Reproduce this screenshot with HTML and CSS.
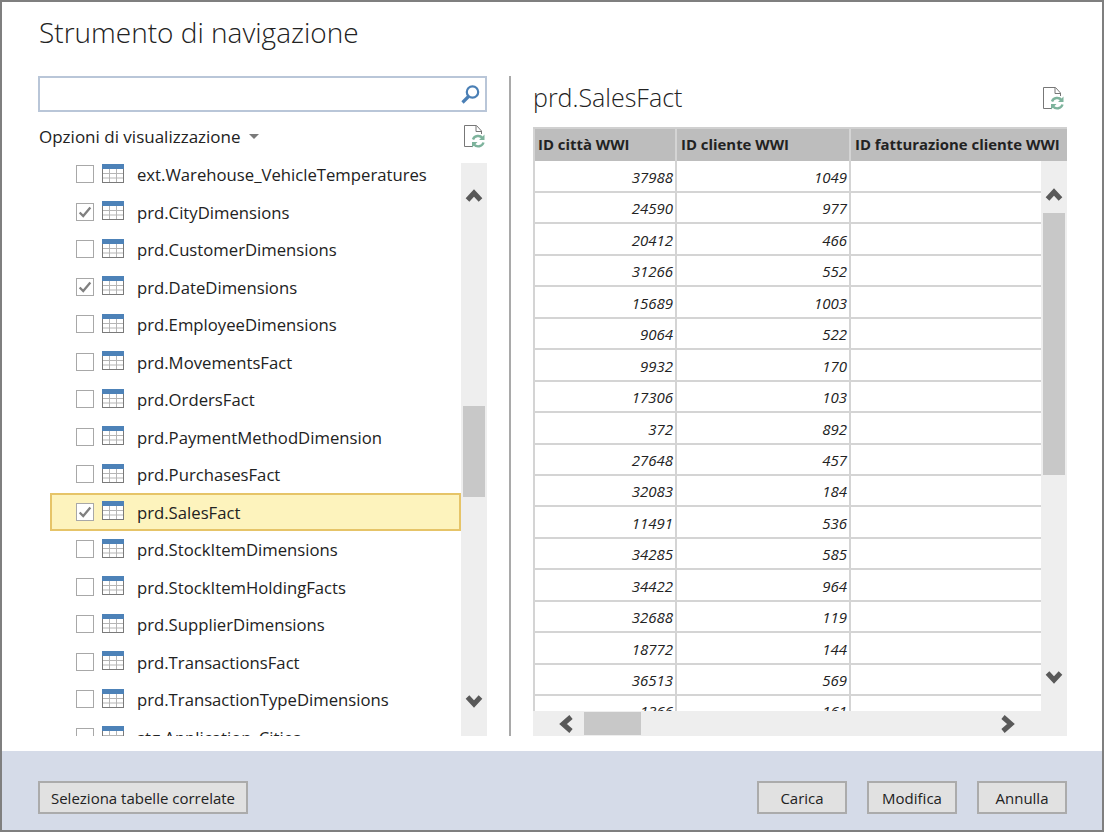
FILE: index.html
```html
<!DOCTYPE html>
<html lang="it">
<head>
    <meta charset="UTF-8">
    <title>Strumento di navigazione</title>
    <link rel="stylesheet" href="styles.css">
</head>
<body>
    <svg class="defs" width="0" height="0">
        <symbol id="table-icon" viewBox="0 0 22 19">
            <rect x="0.5" y="0.5" width="21" height="18" fill="#fff" stroke="#7a7a7a"/>
            <path d="M1 9.5h20M1 14h20M7.5 5v13M14.5 5v13" stroke="#b5b5b5" fill="none"/>
            <rect width="22" height="5" fill="#4d82b8"/>
        </symbol>
        <symbol id="refresh-icon" viewBox="0 0 22 23">
            <path d="M10 21.5H1.5V0.5H13.5L18.5 6V9M13 1V6.5H18.5" fill="none" stroke="#777" stroke-width="1"/>
            <path d="M10 14.5a5.6 5.6 0 0 1 9.5 -1.5M20.5 17.5a5.6 5.6 0 0 1 -9.5 2" fill="none" stroke="#7db39c" stroke-width="2.4"/>
            <path d="M21.5 9.5v5.5h-5.5zM9 22.5v-5.5h5.5z" fill="#7db39c"/>
        </symbol>
        <symbol id="chevron-up" viewBox="0 0 18 14">
            <path d="M2.5 12L9 5l6.500 7" fill="none" stroke="#595959" stroke-width="5"/>
        </symbol>
        <symbol id="chevron-down" viewBox="0 0 18 14">
            <path d="M2.500 2L9 9l6.500-7" fill="none" stroke="#595959" stroke-width="5"/>
        </symbol>
        <symbol id="chevron-left" viewBox="0 0 16 18">
            <path d="M14 2L6 9l8 7" fill="none" stroke="#595959" stroke-width="5"/>
        </symbol>
        <symbol id="chevron-right" viewBox="0 0 16 18">
            <path d="M2 2l8 7-8 7" fill="none" stroke="#595959" stroke-width="5"/>
        </symbol>
        <symbol id="check-icon" viewBox="0 0 18 18">
            <path d="M3 9.500l4 4 8-9.500" fill="none" stroke="#808080" stroke-width="2.600"/>
        </symbol>
    </svg>

    <div class="dialog">
        <h1 class="dialog-title">Strumento di navigazione</h1>

        <div class="dialog-body">
            <div class="nav-pane">
                <div class="search-box">
                    <svg class="search-icon" width="19" height="19" viewBox="0 0 19 19">
                        <circle cx="11.500" cy="7" r="5.700" fill="none" stroke="#4a7fb5" stroke-width="2.200"/>
                        <path d="M7.500 11.500L1.500 17.500" stroke="#4a7fb5" stroke-width="3.200" fill="none"/>
                    </svg>
                </div>
                <div class="options-row">
                    <span class="options-label">Opzioni di visualizzazione</span>
                    <span class="caret"></span>
                    <svg class="refresh" width="22" height="23"><use href="#refresh-icon"/></svg>
                </div>
                <div class="list-wrap">
                    <div class="list">
                        <ul class="tables">
                            <li class="table-row"><span class="check"></span><svg class="tbl" width="22" height="19"><use href="#table-icon"/></svg><span class="name">ext.Warehouse_VehicleTemperatures</span></li>
                            <li class="table-row"><span class="check"><svg width="16" height="16"><use href="#check-icon"/></svg></span><svg class="tbl" width="22" height="19"><use href="#table-icon"/></svg><span class="name">prd.CityDimensions</span></li>
                            <li class="table-row"><span class="check"></span><svg class="tbl" width="22" height="19"><use href="#table-icon"/></svg><span class="name">prd.CustomerDimensions</span></li>
                            <li class="table-row"><span class="check"><svg width="16" height="16"><use href="#check-icon"/></svg></span><svg class="tbl" width="22" height="19"><use href="#table-icon"/></svg><span class="name">prd.DateDimensions</span></li>
                            <li class="table-row"><span class="check"></span><svg class="tbl" width="22" height="19"><use href="#table-icon"/></svg><span class="name">prd.EmployeeDimensions</span></li>
                            <li class="table-row"><span class="check"></span><svg class="tbl" width="22" height="19"><use href="#table-icon"/></svg><span class="name">prd.MovementsFact</span></li>
                            <li class="table-row"><span class="check"></span><svg class="tbl" width="22" height="19"><use href="#table-icon"/></svg><span class="name">prd.OrdersFact</span></li>
                            <li class="table-row"><span class="check"></span><svg class="tbl" width="22" height="19"><use href="#table-icon"/></svg><span class="name">prd.PaymentMethodDimension</span></li>
                            <li class="table-row"><span class="check"></span><svg class="tbl" width="22" height="19"><use href="#table-icon"/></svg><span class="name">prd.PurchasesFact</span></li>
                            <li class="table-row selected"><span class="check"><svg width="16" height="16"><use href="#check-icon"/></svg></span><svg class="tbl" width="22" height="19"><use href="#table-icon"/></svg><span class="name">prd.SalesFact</span></li>
                            <li class="table-row"><span class="check"></span><svg class="tbl" width="22" height="19"><use href="#table-icon"/></svg><span class="name">prd.StockItemDimensions</span></li>
                            <li class="table-row"><span class="check"></span><svg class="tbl" width="22" height="19"><use href="#table-icon"/></svg><span class="name">prd.StockItemHoldingFacts</span></li>
                            <li class="table-row"><span class="check"></span><svg class="tbl" width="22" height="19"><use href="#table-icon"/></svg><span class="name">prd.SupplierDimensions</span></li>
                            <li class="table-row"><span class="check"></span><svg class="tbl" width="22" height="19"><use href="#table-icon"/></svg><span class="name">prd.TransactionsFact</span></li>
                            <li class="table-row"><span class="check"></span><svg class="tbl" width="22" height="19"><use href="#table-icon"/></svg><span class="name">prd.TransactionTypeDimensions</span></li>
                            <li class="table-row"><span class="check"></span><svg class="tbl" width="22" height="19"><use href="#table-icon"/></svg><span class="name">stg.Application_Cities</span></li>
                        </ul>
                    </div>
                    <div class="vscroll list-scroll">
                        <svg class="chev-up" width="18" height="14"><use href="#chevron-up"/></svg>
                        <div class="thumb"></div>
                        <svg class="chev-down" width="18" height="14"><use href="#chevron-down"/></svg>
                    </div>
                </div>
            </div>

            <div class="preview-pane">
                <div class="preview-head">
                    <h2 class="preview-title">prd.SalesFact</h2>
                    <svg class="refresh" width="22" height="23"><use href="#refresh-icon"/></svg>
                </div>
                <div class="grid-head">
                    <div class="col-head">ID città WWI</div>
                    <div class="col-head">ID cliente WWI</div>
                    <div class="col-head">ID fatturazione cliente WWI</div>
                </div>
                <div class="grid-main">
                    <div class="grid-rows">
                        <div class="grid-row"><div class="cell">37988</div><div class="cell">1049</div><div class="cell"></div></div>
                        <div class="grid-row"><div class="cell">24590</div><div class="cell">977</div><div class="cell"></div></div>
                        <div class="grid-row"><div class="cell">20412</div><div class="cell">466</div><div class="cell"></div></div>
                        <div class="grid-row"><div class="cell">31266</div><div class="cell">552</div><div class="cell"></div></div>
                        <div class="grid-row"><div class="cell">15689</div><div class="cell">1003</div><div class="cell"></div></div>
                        <div class="grid-row"><div class="cell">9064</div><div class="cell">522</div><div class="cell"></div></div>
                        <div class="grid-row"><div class="cell">9932</div><div class="cell">170</div><div class="cell"></div></div>
                        <div class="grid-row"><div class="cell">17306</div><div class="cell">103</div><div class="cell"></div></div>
                        <div class="grid-row"><div class="cell">372</div><div class="cell">892</div><div class="cell"></div></div>
                        <div class="grid-row"><div class="cell">27648</div><div class="cell">457</div><div class="cell"></div></div>
                        <div class="grid-row"><div class="cell">32083</div><div class="cell">184</div><div class="cell"></div></div>
                        <div class="grid-row"><div class="cell">11491</div><div class="cell">536</div><div class="cell"></div></div>
                        <div class="grid-row"><div class="cell">34285</div><div class="cell">585</div><div class="cell"></div></div>
                        <div class="grid-row"><div class="cell">34422</div><div class="cell">964</div><div class="cell"></div></div>
                        <div class="grid-row"><div class="cell">32688</div><div class="cell">119</div><div class="cell"></div></div>
                        <div class="grid-row"><div class="cell">18772</div><div class="cell">144</div><div class="cell"></div></div>
                        <div class="grid-row"><div class="cell">36513</div><div class="cell">569</div><div class="cell"></div></div>
                        <div class="grid-row"><div class="cell">1366</div><div class="cell">161</div><div class="cell"></div></div>
                    </div>
                    <div class="vscroll grid-scroll">
                        <svg class="chev-up" width="18" height="14"><use href="#chevron-up"/></svg>
                        <div class="thumb"></div>
                        <svg class="chev-down" width="18" height="14"><use href="#chevron-down"/></svg>
                    </div>
                </div>
                <div class="hscroll">
                    <svg class="chev-left" width="16" height="18"><use href="#chevron-left"/></svg>
                    <div class="hthumb"></div>
                    <svg class="chev-right" width="16" height="18"><use href="#chevron-right"/></svg>
                </div>
            </div>
        </div>

        <div class="dialog-footer">
            <button class="btn btn-related">Seleziona tabelle correlate</button>
            <div class="footer-actions">
                <button class="btn btn-action">Carica</button>
                <button class="btn btn-action">Modifica</button>
                <button class="btn btn-action">Annulla</button>
            </div>
        </div>
    </div>
</body>
</html>
```

FILE: styles.css
```css
* {
    margin: 0;
    padding: 0;
    box-sizing: border-box;
}

html, body {
    height: 100%;
    overflow: hidden;
}

body {
    font-family: "Open Sans", "Noto Sans", sans-serif;
    color: #222;
    background: #fff;
}

.defs {
    position: absolute;
}

.dialog {
    width: 1104px;
    height: 832px;
    border: 2px solid #7f7f7f;
    display: flex;
    flex-direction: column;
    background: #fff;
}

.dialog-title {
    font-size: 28px;
    font-weight: 300;
    line-height: 36px;
    padding: 12px 0 0 37px;
    height: 74px;
}

.dialog-body {
    display: flex;
    height: 660px;
    padding-left: 36px;
}

/* left side */
.nav-pane {
    width: 449px;
    display: flex;
    flex-direction: column;
}

.search-box {
    height: 36px;
    border: 2px solid #b9c6d8;
    display: flex;
    align-items: center;
    justify-content: flex-end;
    padding-right: 5px;
}

.options-row {
    height: 51px;
    display: flex;
    align-items: center;
    padding: 0 2px 2px 1px;
    font-size: 17px;
}

.caret {
    width: 0;
    height: 0;
    margin-left: 8px;
    border-left: 5px solid transparent;
    border-right: 5px solid transparent;
    border-top: 5px solid #7a7a7a;
}

.refresh {
    flex: none;
    margin-left: auto;
}

.list-wrap {
    display: flex;
    height: 573px;
}

.list {
    flex: 1;
    overflow: hidden;
}

.tables {
    list-style: none;
    margin-top: -7.5px;
    padding-left: 12px;
}

.table-row {
    height: 37.5px;
    display: flex;
    align-items: center;
    padding-left: 26px;
    font-size: 16.7px;
    line-height: 26px;
    white-space: nowrap;
}

.table-row.selected {
    background: #fdf3bd;
    border: 2px solid #e6c468;
    padding-left: 24px;
}

.name {
    padding-top: 2px;
}

.check {
    width: 18px;
    height: 18px;
    border: 1px solid #a8a8a8;
    background: #fff;
    display: flex;
    align-items: center;
    justify-content: center;
    margin-right: 8px;
}

.tbl {
    flex: none;
    margin: -2px 13px 0 0;
}

/* scrollbars */
.vscroll {
    width: 26px;
    background: #eee;
    display: flex;
    flex-direction: column;
    align-items: center;
}

.chev-up {
    flex: none;
    margin-top: 25px;
}

.chev-down {
    flex: none;
    margin-top: auto;
    margin-bottom: 27px;
}

.thumb {
    width: 22px;
    background: #c8c8c8;
}

.list-scroll .thumb {
    height: 91px;
    margin-top: 204px;
}

.grid-scroll .chev-up {
    margin-top: 26px;
}

.grid-scroll .chev-down {
    margin-bottom: 26px;
}

.grid-scroll .thumb {
    height: 262px;
    margin-top: 12px;
}

.hscroll {
    height: 25px;
    background: #eee;
    display: flex;
    align-items: center;
    padding-left: 24px;
}

.hthumb {
    width: 57px;
    height: 23px;
    margin-left: 11px;
    background: #c8c8c8;
}

.chev-right {
    margin-left: 360px;
}

/* right side */
.preview-pane {
    margin-left: 22px;
    width: 558px;
    border-left: 2px solid #a9a9a9;
    padding-left: 22px;
    display: flex;
    flex-direction: column;
}

.preview-head {
    height: 51px;
    display: flex;
    align-items: center;
    padding: 0 3px 6px 0;
}

.preview-title {
    font-size: 25px;
    font-weight: 300;
    margin-top: -4px;
}

.grid-head {
    display: grid;
    grid-template-columns: 142px 174px 218px;
    height: 34px;
    border-top: 2px solid #d0d0d0;
}

.col-head {
    background: #bdbdbd;
    border-left: 2px solid #d4d4d4;
    font-size: 14.9px;
    font-weight: 700;
    line-height: 30px;
    padding-left: 3px;
    white-space: nowrap;
    overflow: hidden;
}

.col-head + .col-head {
    padding-left: 4px;
}

.grid-main {
    display: flex;
    height: 550px;
}

.grid-rows {
    flex: 1;
    overflow: hidden;
}

.grid-row {
    display: grid;
    grid-template-columns: 142px 174px 1fr;
    height: 31.45px;
}

.cell {
    height: 32px;
    border-left: 2px solid #d4d4d4;
    border-bottom: 2px solid #d4d4d4;
    font-size: 15px;
    font-style: italic;
    line-height: 31px;
    text-align: right;
    padding: 1px 2px 0 0;
}

/* footer */
.dialog-footer {
    margin-top: 15px;
    flex: 1;
    background: #d5dbe8;
    display: flex;
    align-items: flex-start;
    justify-content: space-between;
    padding: 30px 35px 0 36px;
}

.footer-actions {
    display: flex;
    gap: 20px;
}

.btn {
    height: 33px;
    padding: 0 10px;
    background: #e1e1e1;
    border: 2px solid #ababab;
    font-family: inherit;
    font-size: 15px;
    color: #222;
}

.btn-related {
    width: 210px;
}

.btn-action {
    width: 90px;
}
```
